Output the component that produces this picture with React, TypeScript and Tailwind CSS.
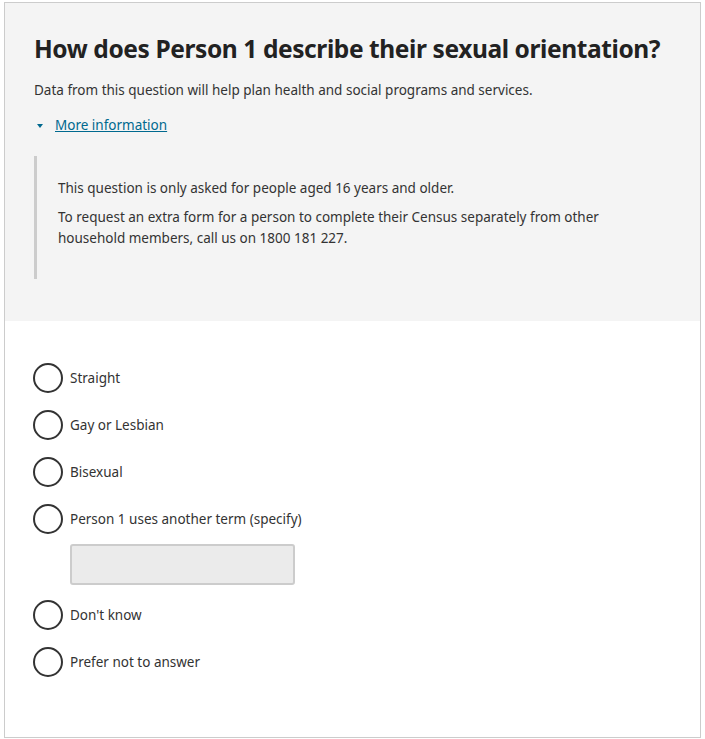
import React from 'react';

const options = [
  'Straight',
  'Gay or Lesbian',
  'Bisexual',
  'Person 1 uses another term (specify)',
  "Don't know",
  'Prefer not to answer',
];

const RadioRow: React.FC<{ label: string }> = ({ label }) => (
  <label className="flex items-center gap-[7px] h-[30px] cursor-pointer">
    <span className="w-[30px] h-[30px] rounded-full border-2 border-[#333] bg-white shrink-0" />
    <span className="text-[13.5px] text-[#333]">{label}</span>
  </label>
);

export default function App() {
  return (
    <div
      className="pt-[2px] pl-[4px]"
      style={{ fontFamily: '"Noto Sans", "Open Sans", sans-serif' }}
    >
      <div className="w-[697px] h-[736px] border border-[#cccccc] bg-white">
        <div className="bg-[#f4f4f4] pl-[29px] pr-[10px] pt-[30px] pb-[42px]">
          <h1 className="text-[24.5px] leading-[32px] font-bold tracking-[-0.4px] text-[#222] whitespace-nowrap">
            How does Person 1 describe their sexual orientation?
          </h1>
          <p className="mt-[15px] text-[13.5px] leading-[21px] text-[#333]">
            Data from this question will help plan health and social programs and services.
          </p>
          <div className="mt-[14px] flex items-center gap-[12px] h-[21px] pl-[3px]">
            <svg width="6" height="4" viewBox="0 0 6 4" className="shrink-0">
              <path d="M0 0 L6 0 L3 4 Z" fill="#00698f" />
            </svg>
            <a href="#" className="text-[13.5px] leading-[21px] text-[#00698f] underline">
              More information
            </a>
          </div>
          <div className="mt-[20px] border-l-[3px] border-[#cccccc] pl-[21px] pt-[22px] pb-[30px] text-[13.5px] leading-[21px] text-[#333]">
            <p>This question is only asked for people aged 16 years and older.</p>
            <p className="mt-[8px] max-w-[560px]">
              To request an extra form for a person to complete their Census separately from other
              household members, call us on 1800 181 227.
            </p>
          </div>
        </div>

        <div className="pl-[28px] pt-[42px] flex flex-col">
          <div className="flex flex-col gap-[17px]">
            {options.slice(0, 4).map((o) => (
              <RadioRow key={o} label={o} />
            ))}
          </div>
          <input
            type="text"
            className="ml-[37px] mt-[10px] w-[225px] h-[41px] bg-[#ebebeb] border-2 border-[#cccccc] rounded-[3px]"
          />
          <div className="mt-[15px] flex flex-col gap-[17px]">
            {options.slice(4).map((o) => (
              <RadioRow key={o} label={o} />
            ))}
          </div>
        </div>
      </div>
    </div>
  );
}
